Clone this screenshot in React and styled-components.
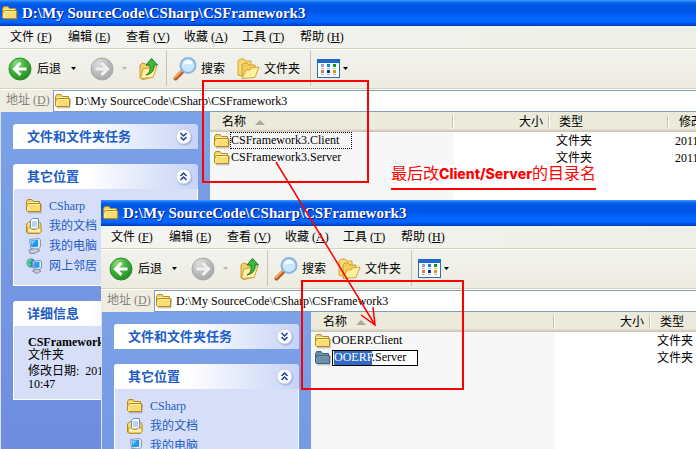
import React, { useEffect, useRef } from "react";
import styled, { createGlobalStyle, css } from "styled-components";

const GlobalStyle = createGlobalStyle`
  * { box-sizing: border-box; }
  body { margin: 0; overflow: hidden; }
  body, button, input {
    font-family: "Liberation Serif", "Noto Sans CJK SC", serif;
    font-size: 12px;
    line-height: 16px;
    color: #000;
  }
  button { border: 0; padding: 0; background: none; white-space: nowrap; }
`;

const Desktop = styled.main`
  position: relative;
  height: 100vh;
  overflow: hidden;
`;

const WindowFrame = styled.section`
  display: flex;
  flex-direction: column;
  height: 100%;
  overflow: hidden;
  background: #fff;
  ${(p) =>
    p.$floating &&
    css`
      position: absolute;
      left: 101px;
      top: 200px;
      right: 0;
      bottom: 0;
      height: auto;
    `}
`;

const TitleBar = styled.header`
  display: flex;
  align-items: center;
  gap: 4px;
  flex: none;
  height: 26px;
  padding: 0 2px;
  background: linear-gradient(
    #3d95ff 0, #2a86fb 1px, #0463ee 3px, #0054e3 6px, #0057ea 12px,
    #0466ff 18px, #0466ff 22px, #0050e0 24px, #0038b4 26px
  );
`;

const Title = styled.h1`
  margin: 0;
  font-size: 15px;
  line-height: 20px;
  font-weight: bold;
  color: #fff;
  text-shadow: 1px 1px #0a1883;
  white-space: nowrap;
`;

const MenuBar = styled.nav`
  display: grid;
  grid-template-columns: repeat(6, 58px);
  flex: none;
  height: 24px;
  padding-left: 10px;
  background: linear-gradient(to right, #f4f4f1, #efefe9);
  border-bottom: 1px solid #fff;
  box-shadow: inset 0 -1px #d8d2bd;
`;

const MenuButton = styled.button`
  height: 22px;
  text-align: left;
`;

const ToolBar = styled.div`
  display: flex;
  align-items: center;
  flex: none;
  height: 40px;
  padding: 0 0 2px 8px;
  background: linear-gradient(#f2f2ee, #edece0);
  border-bottom: 1px solid #fff;
  box-shadow: inset 0 -1px #d8d2bd;
`;

const ToolButton = styled.button`
  display: flex;
  align-items: center;
  gap: ${(p) => p.$gap || 4}px;
  margin-right: ${(p) => p.$after || 0}px;
`;

const Divider = styled.span`
  width: 1px;
  height: 35px;
  margin-right: 6px;
  background: #c9c5b2;
`;

const AddressBar = styled.div`
  display: flex;
  flex: none;
  height: 22px;
  background: #efede2;
`;

const AddressLabel = styled.label`
  width: 53px;
  padding-left: 6px;
  line-height: 20px;
  color: #85837a;
`;

const AddressBox = styled.div`
  display: flex;
  align-items: center;
  flex: 1;
  gap: 4px;
  padding-left: 1px;
  background: #fff;
  border: 1px solid #7f9db9;
  border-right: 0;
`;

const AddressInput = styled.input`
  flex: 1;
  min-width: 0;
  border: 0;
  padding: 0;
  outline: 0;
  background: none;
`;

const Body = styled.div`
  display: flex;
  flex: 1;
  min-height: 0;
  border-left: 1px solid #dbe3f6;
`;

const Sidebar = styled.aside`
  display: flex;
  flex-direction: column;
  gap: 15px;
  flex: none;
  width: 209px;
  padding: 12px;
  overflow: hidden;
  background: linear-gradient(#7ba2e7, #6f8cdf 340px);
`;

const Panel = styled.section`
  flex: none;
`;

const PanelHeader = styled.button`
  display: flex;
  align-items: center;
  justify-content: space-between;
  width: 100%;
  height: 25px;
  padding: 0 5px 0 14px;
  border-radius: 3px 3px 0 0;
  background: linear-gradient(to right, #fff 40%, #c6d3f7);
  color: #215dc6;
  font-size: 13px;
  font-weight: bold;
`;

const PanelBody = styled.div`
  border: 1px solid #fff;
  border-top: 0;
  background: #d6dff7;
`;

const PlaceList = styled(PanelBody)`
  display: flex;
  flex-direction: column;
  gap: 4px;
  padding: 9px 12px 11px;
`;

const PlaceLink = styled.a`
  display: flex;
  gap: 7px;
  color: #215dc6;
  text-decoration: none;
`;

const Details = styled(PanelBody)`
  padding: 10px 14px 8px;
  line-height: 13px;
  p { margin: 0 0 3px; }
`;

const FileArea = styled.div`
  flex: 1;
  min-width: 0;
  overflow: hidden;
  background: linear-gradient(to right, #f7f7f7 244px, #fff 244px);
`;

const FileTable = styled.table`
  width: 100%;
  min-width: 459px;
  table-layout: fixed;
  border-collapse: collapse;
`;

const HeadCell = styled.th`
  width: ${(p) => (p.$width ? `${p.$width}px` : "auto")};
  height: 20px;
  padding: 0 ${(p) => (p.$end ? 7 : 0)}px 0 ${(p) => p.$start || 0}px;
  text-align: ${(p) => (p.$end ? "right" : "left")};
  font-weight: normal;
  line-height: 20px;
  white-space: nowrap;
  background:
    linear-gradient(#c7c5b2, #c7c5b2) right 1px top 3px / 1px 13px no-repeat,
    linear-gradient(#fff, #fff) right 0 top 3px / 1px 13px no-repeat,
    linear-gradient(#ebeadb 17px, #e2decd 17px, #e2decd 18px, #d6d2c2 18px, #d6d2c2 19px, #cbc7b8 19px);
`;

const SortLabel = styled.span`
  display: flex;
  align-items: center;
  gap: 9px;
`;

const Cell = styled.td`
  height: 17px;
  padding: 0 0 0 ${(p) => p.$start || 0}px;
  white-space: nowrap;
`;

const FileName = styled.div`
  display: flex;
  align-items: center;
  height: 17px;
`;

const NameText = styled.span`
  padding-left: 1px;
  border: 1px dotted transparent;
  border-left: 0;
  height: 17px;
  line-height: 15px;
  ${(p) =>
    p.$focused &&
    css`
      min-width: 122px;
      padding-left: 0;
      border: 1px dotted #000;
    `}
`;

const RenameInput = styled.input`
  width: 86px;
  height: 16px;
  margin: 0 0 0 1px;
  padding: 0 1px;
  border: 1px solid #000;
  border-radius: 0;
  outline: 0;
  line-height: 14px;
  background: #fff;
  &::selection { background: #316ac5; color: #fff; }
`;

const RedBox = styled.div`
  position: absolute;
  left: ${(p) => p.$x}px;
  top: ${(p) => p.$y}px;
  width: ${(p) => p.$w}px;
  height: ${(p) => p.$h}px;
  border: 2px solid #f00;
  pointer-events: none;
`;

const ArrowOverlay = styled.svg`
  position: absolute;
  left: 270px;
  top: 158px;
  pointer-events: none;
`;

const Note = styled.p`
  position: absolute;
  left: 391px;
  top: 165px;
  margin: 0;
  height: 25px;
  line-height: 18px;
  font-size: 16px;
  white-space: nowrap;
  color: #f00;
  background: #fff;
  border-bottom: 2px solid #f00;
  b {
    font-family: Inter, sans-serif;
    font-size: 14px;
    font-weight: 800;
  }
`;

const FolderIcon = ({ selected }) => {
  const c = selected
    ? ["#5f86a3", "#7d9aa9", "#6e90a5", "#3b6386"]
    : ["#f3cf63", "#fff3a8", "#fbdc73", "#b58a1c"];
  return (
    <svg width="16" height="16" viewBox="0 0 16 16" aria-hidden="true">
      <path d="M2 14.8H14.8L15.5 6" fill="none" stroke="#777" strokeOpacity=".55" />
      <path d="M.5 12.5V3.5L1.8 1.5H6L7.5 3.5H13.5V6" fill={c[0]} stroke={c[3]} />
      <path d="M2 4.5H12.5V6" fill="none" stroke={c[1]} />
      <path d="M.5 12.5V8L2.5 5.5H14.5V13.5H1.5Z" fill={c[2]} stroke={c[3]} />
      <path d="M2 12.5V8.5L3.2 6.5H13.5" fill="none" stroke={c[1]} />
    </svg>
  );
};

const DocumentsIcon = () => (
  <svg width="16" height="16" viewBox="0 0 16 16" aria-hidden="true">
    <path d="M.5 14V6L3 3.5H13L15 6V14L13.5 15.5H2Z" fill="#f6d873" stroke="#b58a1c" />
    <path d="M4.5 11V2.5L6.5.5H12.5V11Z" fill="#fff" stroke="#5d8fd0" />
    <path d="M6 4H11M6 6H11M6 8H11" stroke="#77a9e4" />
    <path d="M1 10H5L6 11.5H10L11 10H15V14L13.5 15H2Z" fill="#fff0a9" stroke="#c69c2f" />
  </svg>
);

const ComputerIcon = () => (
  <svg width="16" height="16" viewBox="0 0 16 16" aria-hidden="true">
    <path d="M3 12L10 10L14 12.5L8 15.5H4Z" fill="#c9cbdc" stroke="#8a8ca6" />
    <path d="M3.5 1.5L13 .5L14.5 2V9L12 11L4.5 10.5Z" fill="#e1e7f3" stroke="#8c9bb8" />
    <path d="M4.5 2.5L12 1.8V8.8L5.3 9.3Z" fill="#2496ea" />
    <path d="M5 3L10 2.5L6 7Z" fill="#7ccafb" />
  </svg>
);

const NetworkIcon = () => (
  <svg width="16" height="16" viewBox="0 0 16 16" aria-hidden="true">
    <circle cx="5" cy="5" r="4.5" fill="#258edb" />
    <path d="M1 5Q2 1 5 1L6 3L3 4L5 7L3 9Q1 8 1 5Z" fill="#6fcf55" />
    <path d="M6.5 13L11 11L15 13L11 15.5Z" fill="#c9cbdc" stroke="#8a8ca6" />
    <path d="M6.5 3.5L14.5 2.5L15.5 4V10L13 11.5L7.5 11Z" fill="#e5eaf5" stroke="#7c91b5" />
    <path d="M7.5 4.5L13.5 3.8V9.6L8.3 10Z" fill="#2e9bec" />
  </svg>
);

const ArrowDisc = ({ forward }) => (
  <svg width="24" height="24" viewBox="0 0 24 24" aria-hidden="true">
    <defs>
      <radialGradient id={forward ? "discGray" : "discGreen"} cx=".35" cy=".25" r=".85">
        <stop offset="0" stopColor={forward ? "#dedede" : "#8fdc7b"} />
        <stop offset=".5" stopColor={forward ? "#bdbdbd" : "#3fae3a"} />
        <stop offset="1" stopColor={forward ? "#a3a3a3" : "#1d861d"} />
      </radialGradient>
    </defs>
    <circle cx="12" cy="12" r="11" fill={forward ? "url(#discGray)" : "url(#discGreen)"} stroke={forward ? "#a9a9a9" : "#27902a"} />
    <path
      d={forward ? "M5.5 12H17M11.5 6L17.5 12L11.5 18" : "M18.5 12H7M12.5 6L6.5 12L12.5 18"}
      fill="none"
      stroke={forward ? "#f0f0f0" : "#fff"}
      strokeWidth="3"
    />
  </svg>
);

const Caret = ({ color = "#000" }) => (
  <svg width="5" height="3" viewBox="0 0 5 3" aria-hidden="true">
    <path d="M0 0H5L2.5 3Z" fill={color} />
  </svg>
);

const UpIcon = () => (
  <svg width="20" height="24" viewBox="0 0 20 24" aria-hidden="true">
    <path d="M1 21V8L3 6L7 7L8 9L14 8V20L4 22.5Z" fill="#f2cf68" stroke="#c99a2e" />
    <path d="M1.5 21.5L4 12L18 9.5L14 20.5Z" fill="#fff0a6" stroke="#d1a53c" />
    <path d="M7 18Q12 16 11 8H7L12.5 1.5L18.5 8H15Q16 16 7 18Z" fill="#3fb83c" stroke="#168020" />
  </svg>
);

const SearchIcon = () => (
  <svg width="24" height="24" viewBox="0 0 24 24" aria-hidden="true">
    <path d="M2.5 21.5L9.5 14.5" stroke="#ba5b23" strokeWidth="4" strokeLinecap="round" />
    <path d="M2 20.5L9 13.5" stroke="#f3a35b" strokeWidth="2" strokeLinecap="round" />
    <circle cx="15" cy="8.5" r="7.5" fill="#c8e8fc" stroke="#8db3e2" strokeWidth="2" />
    <path d="M10 8Q11 3 16 3Q20 4 19 7Q15 6 10 8Z" fill="#f4fcff" />
  </svg>
);

const FoldersIcon = () => (
  <svg width="23" height="22" viewBox="0 0 23 22" aria-hidden="true">
    <path d="M1 17V3L3 1H7L9 3H14V14L4 18Z" fill="#f7d873" stroke="#d4a537" />
    <path d="M5 19V7L7 5H10L12 7H18V16Z" fill="#f2cc5c" stroke="#cf9f34" />
    <path d="M5 20.5L9 12H13L14 10L22 9L18 19.5Z" fill="#fff0a0" stroke="#d4a537" />
  </svg>
);

const ViewsIcon = () => (
  <svg width="23" height="19" viewBox="0 0 23 19" aria-hidden="true">
    <rect x=".5" y=".5" width="22" height="18" fill="#fff" stroke="#2a6cc0" />
    <path d="M0 0H23V4H0Z" fill="#1c68cc" />
    <path d="M4 5H7V8H4Z" fill="#9a99cc" />
    <path d="M10 5H13V8H10Z" fill="#1683df" />
    <path d="M16 5H19V8H16Z" fill="#0a9a10" />
    <path d="M4 11H7V14H4Z" fill="#f2743e" />
    <path d="M10 11H13V14H10Z" fill="#07349b" />
    <path d="M16 11H19V14H16Z" fill="#d2a000" />
    <path d="M4 9.5H7M10 9.5H13M16 9.5H19M4 15.5H7M10 15.5H13M16 15.5H19" stroke="#b9b9b9" />
  </svg>
);

const ChevronDisc = ({ up }) => (
  <svg width="18" height="18" viewBox="0 0 18 18" aria-hidden="true">
    <circle cx="9.5" cy="9.5" r="8" fill="#8e9fce" fillOpacity=".6" />
    <circle cx="8.5" cy="8.5" r="7.5" fill="#fff" stroke="#c3cbe4" />
    <path
      d={up ? "M5.5 8L8.5 5L11.5 8M5.5 12L8.5 9L11.5 12" : "M5.5 5L8.5 8L11.5 5M5.5 9L8.5 12L11.5 9"}
      fill="none"
      stroke="#1c3f94"
      strokeWidth="1.5"
    />
  </svg>
);

const menus = [
  ["文件", "F"],
  ["编辑", "E"],
  ["查看", "V"],
  ["收藏", "A"],
  ["工具", "T"],
  ["帮助", "H"],
];

const places = [
  ["CSharp", FolderIcon],
  ["我的文档", DocumentsIcon],
  ["我的电脑", ComputerIcon],
  ["网上邻居", NetworkIcon],
];

const path = "D:\\My SourceCode\\CSharp\\CSFramework3";

function RenameBox({ value, selectTo }) {
  const ref = useRef(null);
  useEffect(() => {
    ref.current.focus({ preventScroll: true });
    ref.current.setSelectionRange(0, selectTo);
  }, [selectTo]);
  return <RenameInput ref={ref} defaultValue={value} aria-label="名称" spellCheck={false} />;
}

function Explorer({ id, floating, files, placeCount, details, modified }) {
  return (
    <WindowFrame $floating={floating}>
      <TitleBar>
        <FolderIcon />
        <Title>{path}</Title>
      </TitleBar>
      <MenuBar>
        {menus.map(([name, key]) => (
          <MenuButton key={key}>
            {name} (<u>{key}</u>)
          </MenuButton>
        ))}
      </MenuBar>
      <ToolBar>
        <ToolButton $gap={5} $after={10}>
          <ArrowDisc />
          后退
        </ToolButton>
        <ToolButton $after={14} aria-label="后退"><Caret /></ToolButton>
        <ToolButton $gap={8} $after={12} aria-label="前进">
          <ArrowDisc forward />
          <Caret color="#b8b5a8" />
        </ToolButton>
        <ToolButton $after={7} aria-label="向上"><UpIcon /></ToolButton>
        <Divider />
        <ToolButton $after={12}>
          <SearchIcon />
          搜索
        </ToolButton>
        <ToolButton $after={10}>
          <FoldersIcon />
          文件夹
        </ToolButton>
        <Divider />
        <ToolButton $gap={3} aria-label="查看">
          <ViewsIcon />
          <Caret />
        </ToolButton>
      </ToolBar>
      <AddressBar>
        <AddressLabel htmlFor={id}>
          地址 (<u>D</u>)
        </AddressLabel>
        <AddressBox>
          <FolderIcon />
          <AddressInput id={id} defaultValue={path} spellCheck={false} />
        </AddressBox>
      </AddressBar>
      <Body>
        <Sidebar>
          <Panel>
            <PanelHeader>
              文件和文件夹任务
              <ChevronDisc />
            </PanelHeader>
          </Panel>
          <Panel>
            <PanelHeader>
              其它位置
              <ChevronDisc up />
            </PanelHeader>
            <PlaceList>
              {places.slice(0, placeCount).map(([name, Icon]) => (
                <PlaceLink key={name} href="#">
                  <Icon />
                  {name}
                </PlaceLink>
              ))}
            </PlaceList>
          </Panel>
          {details && (
            <Panel>
              <PanelHeader>详细信息</PanelHeader>
              <Details>
                <b>CSFramework3</b>
                <p>文件夹</p>
                修改日期:&nbsp; 2011
                <br />
                10:47
              </Details>
            </Panel>
          )}
        </Sidebar>
        <FileArea>
          <FileTable>
            <thead>
              <tr>
                <HeadCell $width={244} $start={12}>
                  <SortLabel>
                    名称
                    <svg width="10" height="5" viewBox="0 0 10 5" aria-hidden="true">
                      <path d="M0 5L5 0L10 5Z" fill="#aca899" />
                    </svg>
                  </SortLabel>
                </HeadCell>
                <HeadCell $width={96} $end>大小</HeadCell>
                <HeadCell $width={119} $start={9}>类型</HeadCell>
                {modified && <HeadCell $start={10}>修改</HeadCell>}
              </tr>
            </thead>
            <tbody>
              {files.map((f) => (
                <tr key={f.name}>
                  <Cell $start={4}>
                    <FileName>
                      <FolderIcon selected={f.renaming} />
                      {f.renaming ? (
                        <RenameBox value={f.name} selectTo={5} />
                      ) : (
                        <NameText $focused={f.focused}>{f.name}</NameText>
                      )}
                    </FileName>
                  </Cell>
                  <Cell />
                  <Cell $start={6}>文件夹</Cell>
                  {modified && <Cell $start={6}>{modified}</Cell>}
                </tr>
              ))}
            </tbody>
          </FileTable>
        </FileArea>
      </Body>
    </WindowFrame>
  );
}

export default function App() {
  return (
    <Desktop>
      <GlobalStyle />
      <Explorer
        id="address-source"
        placeCount={4}
        details
        modified="2011"
        files={[{ name: "CSFramework3.Client", focused: true }, { name: "CSFramework3.Server" }]}
      />
      <Note>
        最后改<b>Client/Server</b>的目录名
      </Note>
      <Explorer
        id="address-renamed"
        floating
        placeCount={3}
        files={[{ name: "OOERP.Client" }, { name: "OOERP.Server", renaming: true }]}
      />
      <RedBox $x={202} $y={80} $w={167} $h={103} />
      <RedBox $x={301} $y={280} $w={163} $h={110} />
      <ArrowOverlay width="112" height="172" viewBox="270 158 112 172" aria-hidden="true">
        <path d="M276 162L375 325M361 315L375 325L373 307" fill="none" stroke="#f00" strokeWidth="1.5" />
      </ArrowOverlay>
    </Desktop>
  );
}
